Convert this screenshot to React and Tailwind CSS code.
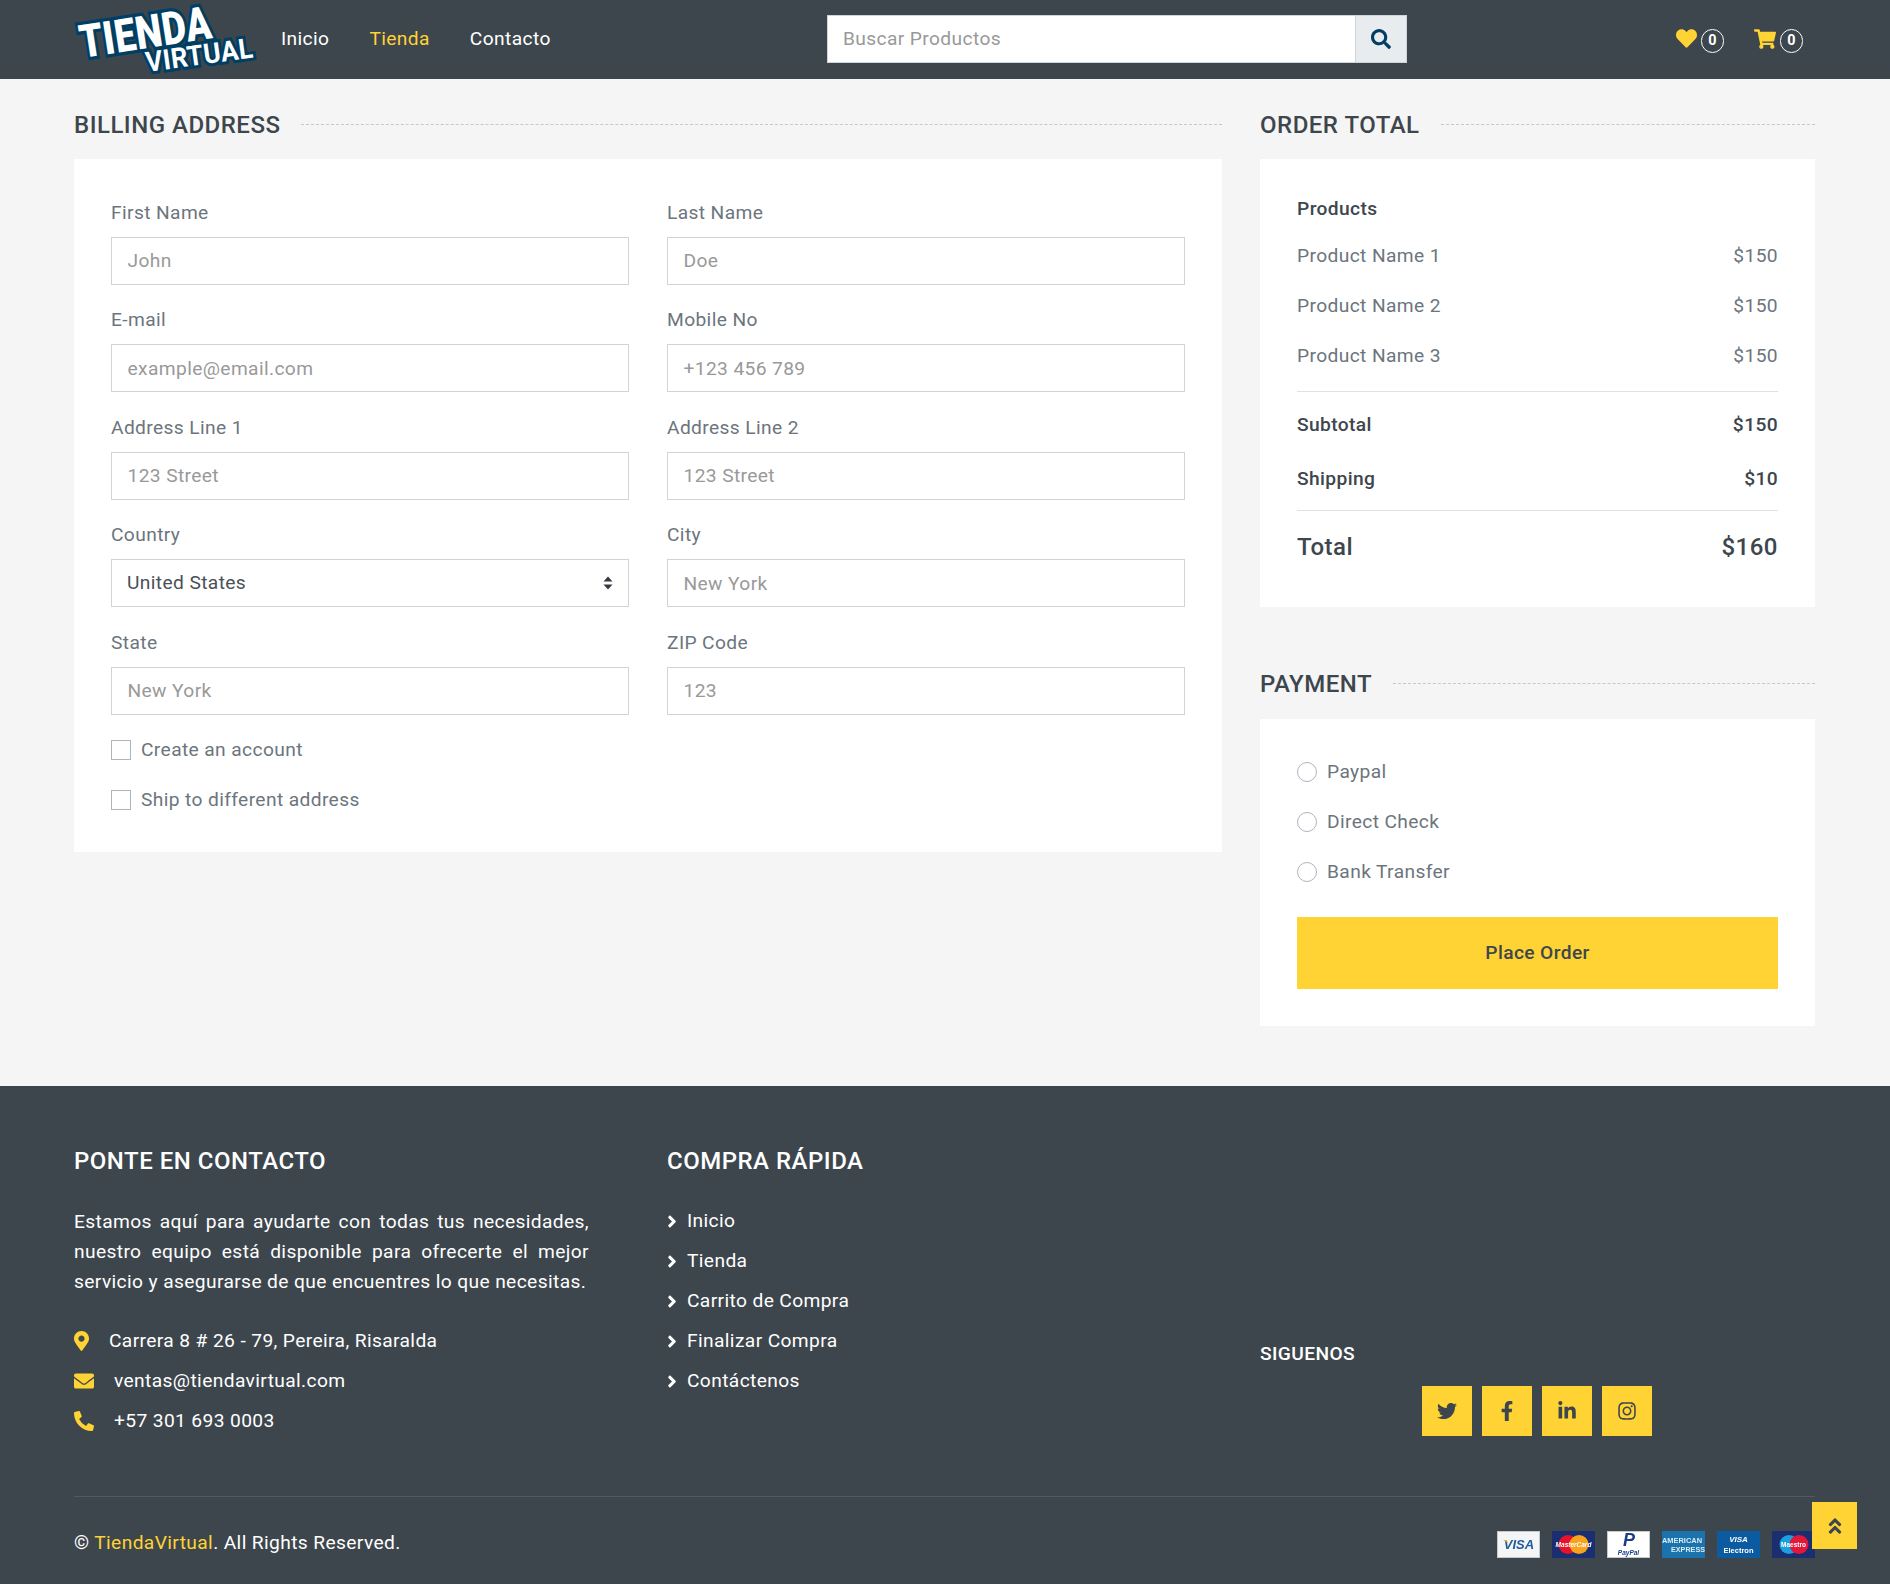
import React from "react";
import {
    FaHeart, FaShoppingCart, FaSearch, FaMapMarkerAlt, FaEnvelope, FaPhoneAlt,
    FaAngleRight, FaTwitter, FaFacebookF, FaLinkedinIn, FaInstagram, FaAngleDoubleUp,
} from "react-icons/fa";

const Logo = () => (
    <svg width="182" height="79" viewBox="0 0 182 79" className="block shrink-0 overflow-visible">
        <text transform="rotate(-8.7 6 58)" x="6" y="58" textLength="133" lengthAdjust="spacingAndGlyphs" fill="#fff" stroke="#003e63" strokeWidth="6.5" strokeLinejoin="miter" paintOrder="stroke" className="[font-family:Roboto,sans-serif] font-black text-[46px]">TIENDA</text>
        <text transform="rotate(-7.8 71 72)" x="71" y="72" textLength="108" lengthAdjust="spacingAndGlyphs" fill="#fff" stroke="#003e63" strokeWidth="6" strokeLinejoin="miter" paintOrder="stroke" className="[font-family:Roboto,sans-serif] font-bold text-[28px]">VIRTUAL</text>
    </svg>
);

const Field = ({ label, placeholder }) => (
    <div className="mb-[20.5px]">
        <label className="block h-[29px] mb-[9.8px] leading-[29px]">{label}</label>
        <input
            type="text"
            placeholder={placeholder}
            className="block w-full h-[48.2px] px-[15.5px] bg-white border border-[#ced4da] text-[#495057] placeholder:text-[#999] outline-none"
        />
    </div>
);

const SelectField = () => (
    <div className="mb-[20.5px]">
        <label className="block h-[29px] mb-[9.8px] leading-[29px]">Country</label>
        <div className="relative">
            <select className="block w-full h-[48.2px] px-[15px] bg-white border border-[#ced4da] text-[#495057] outline-none appearance-none">
                <option>United States</option>
                <option>Afghanistan</option>
                <option>Albania</option>
                <option>Algeria</option>
            </select>
            <svg width="10" height="14" viewBox="0 0 10 14" className="absolute right-[16px] top-[17px] pointer-events-none">
                <path d="M5 0.5L9.5 5.5H0.5Z M5 13.5L0.5 8.5H9.5Z" fill="#343a40" />
            </svg>
        </div>
    </div>
);

const Check = ({ label }) => (
    <div className="flex items-center h-[50px]">
        <span className="w-[20px] h-[20px] bg-white border border-[#adb5bd] mr-[10px]" />
        <span>{label}</span>
    </div>
);

const Radio = ({ label }) => (
    <div className="flex items-center h-[50px]">
        <span className="w-[20px] h-[20px] rounded-full bg-white border border-[#adb5bd] mr-[10px]" />
        <span>{label}</span>
    </div>
);

const SectionTitle = ({ children }) => (
    <div className="flex items-center h-[30px]">
        <h5 className="mt-[2px] font-medium text-[24px] leading-[30px] tracking-[0.5px] text-[#3d464d] uppercase pr-[21px] whitespace-nowrap">{children}</h5>
        <div className="grow border-t border-dashed border-[#c8c8c8]" />
    </div>
);

const PriceRow = ({ name, price }) => (
    <div className="flex justify-between items-center h-[50px]">
        <span>{name}</span>
        <span>{price}</span>
    </div>
);

const TotalRow = ({ name, price }) => (
    <div className="flex justify-between items-center font-medium text-[#3d464d] h-[54px]">
        <span>{name}</span>
        <span>{price}</span>
    </div>
);

const FooterLink = ({ children }) => (
    <a href="#" className="flex items-center h-[40px] text-white">
        <FaAngleRight className="text-[#fff] text-[19px] w-[12px] ml-[-1px] mr-[9px]" />
        {children}
    </a>
);

const Social = ({ Icon }) => (
    <a href="#" className="flex items-center justify-center w-[50px] h-[50px] bg-[#ffd333] text-[#3d464d] text-[20px]">
        <Icon />
    </a>
);

const PayCard = ({ bg, children }) => (
    <svg width="43" height="27" viewBox="0 0 43 27" className="shrink-0 blur-[0.3px]">
        <rect width="43" height="27" fill={bg} />
        {children}
    </svg>
);

const PaymentCards = () => (
    <div className="flex gap-[12px] mt-[2px] tracking-normal [font-family:'Liberation_Sans',sans-serif]">
        <PayCard bg="#f4f5f6">
            <rect x="0.5" y="0.5" width="42" height="26" fill="none" stroke="#c6c8ca" />
            <text x="22" y="18" textAnchor="middle" fill="#1d5c98" className="text-[13px] font-bold italic">VISA</text>
            <path d="M6 9h4l1 3z" fill="#e9a92c" />
        </PayCard>
        <PayCard bg="#1b2f70">
            <circle cx="16" cy="13.5" r="9.5" fill="#e8132a" />
            <circle cx="27" cy="13.5" r="9.5" fill="#f7a31c" />
            <text x="21.5" y="16" textAnchor="middle" fill="#fff" className="text-[6.5px] font-bold italic">MasterCard</text>
        </PayCard>
        <PayCard bg="#fff">
            <rect x="0.5" y="0.5" width="42" height="26" fill="none" stroke="#c6c8ca" />
            <text x="22" y="15" textAnchor="middle" fill="#1b3d85" className="text-[18px] font-bold italic">P</text>
            <text x="21.5" y="24" textAnchor="middle" fill="#1b3d85" className="text-[6.5px] font-bold italic">PayPal</text>
        </PayCard>
        <PayCard bg="#1a73ad">
            <text x="0" y="12" textLength="40" lengthAdjust="spacingAndGlyphs" fill="#d8edf8" className="text-[7.5px] font-bold">AMERICAN</text>
            <text x="9" y="21" textLength="34" lengthAdjust="spacingAndGlyphs" fill="#d8edf8" className="text-[7.5px] font-bold">EXPRESS</text>
        </PayCard>
        <PayCard bg="#0c5aa0">
            <text x="21.5" y="11" textAnchor="middle" fill="#fff" className="text-[8px] font-bold italic">VISA</text>
            <text x="21.5" y="22" textAnchor="middle" fill="#fff" className="text-[7.5px] font-bold">Electron</text>
        </PayCard>
        <PayCard bg="#1b2f70">
            <circle cx="17" cy="13.5" r="9.5" fill="#1aa0dc" />
            <circle cx="27" cy="13.5" r="9.5" fill="#e2173a" />
            <text x="21.5" y="16" textAnchor="middle" fill="#fff" className="text-[6.5px] font-bold">Maestro</text>
        </PayCard>
    </div>
);

const App = () => {
    return (
        <div className="relative w-[1890px] min-h-[1584px] bg-[#f5f5f5] text-[#6c757d] text-[19.2px] tracking-[0.38px] [font-family:Roboto,sans-serif]">
            <header className="flex items-center h-[79px] pl-[76px] bg-[#3d464d]">
                <div className="w-[205px] shrink-0"><Logo /></div>
                <nav className="flex gap-[40px] w-[546px] shrink-0 text-white">
                    <a href="#">Inicio</a>
                    <a href="#" className="text-[#ffd333]">Tienda</a>
                    <a href="#">Contacto</a>
                </nav>
                <div className="flex w-[580px] h-[48px] mb-[1px] shrink-0">
                    <input
                        type="text"
                        placeholder="Buscar Productos"
                        className="grow min-w-0 px-[15px] bg-white border border-[#ced4da] text-[#495057] placeholder:text-[#999] outline-none"
                    />
                    <button className="flex items-center justify-center w-[51px] bg-[#e9ecef] border border-[#ced4da] border-l-0 text-[#003e63] text-[20px]">
                        <FaSearch />
                    </button>
                </div>
                <div className="flex items-center ml-auto mt-[3px] pr-[87px] tracking-normal">
                    <FaHeart className="text-[#ffd333] text-[21px] mr-[4px] mt-[-6px]" />
                    <span className="flex items-center justify-center w-[23px] h-[24px] rounded-full border border-white text-white text-[14.4px] font-bold">0</span>
                    <FaShoppingCart className="text-[#ffd333] text-[22px] ml-[30px] mr-[4px] mt-[-5px]" />
                    <span className="flex items-center justify-center w-[23px] h-[24px] rounded-full border border-white text-white text-[14.4px] font-bold">0</span>
                </div>
            </header>

            <main className="grid grid-cols-[1148px_555px] gap-x-[38px] px-[74px] pt-[30px] pb-[60px]">
                <div>
                    <SectionTitle>Billing Address</SectionTitle>
                    <div className="mt-[20px] bg-white px-[37px] pt-[39px] pb-[27px]">
                        <div className="grid grid-cols-2 gap-x-[38px]">
                            <Field label="First Name" placeholder="John" />
                            <Field label="Last Name" placeholder="Doe" />
                            <Field label="E-mail" placeholder="example@email.com" />
                            <Field label="Mobile No" placeholder="+123 456 789" />
                            <Field label="Address Line 1" placeholder="123 Street" />
                            <Field label="Address Line 2" placeholder="123 Street" />
                            <SelectField />
                            <Field label="City" placeholder="New York" />
                            <Field label="State" placeholder="New York" />
                            <Field label="ZIP Code" placeholder="123" />
                        </div>
                        <div className="mt-[-10px]">
                            <Check label="Create an account" />
                            <Check label="Ship to different address" />
                        </div>
                    </div>
                </div>

                <div>
                    <SectionTitle>Order Total</SectionTitle>
                    <div className="mt-[20px] bg-white px-[37px] pt-[35px] pb-[25px]">
                        <div className="font-medium text-[#3d464d] h-[30px] leading-[30px]">Products</div>
                        <div className="mt-[7px]">
                            <PriceRow name="Product Name 1" price="$150" />
                            <PriceRow name="Product Name 2" price="$150" />
                            <PriceRow name="Product Name 3" price="$150" />
                        </div>
                        <div className="mt-[10px] pt-[6px] border-t border-[#dee2e6]">
                            <TotalRow name="Subtotal" price="$150" />
                            <TotalRow name="Shipping" price="$10" />
                        </div>
                        <div className="flex justify-between items-center mt-[4px] h-[72px] border-t border-[#dee2e6] font-medium text-[#3d464d] text-[24px] tracking-[0.5px]">
                            <span>Total</span>
                            <span>$160</span>
                        </div>
                    </div>

                    <div className="mt-[61px]">
                        <SectionTitle>Payment</SectionTitle>
                    </div>
                    <div className="mt-[21px] bg-white px-[37px] pt-[28px] pb-[37px]">
                        <Radio label="Paypal" />
                        <Radio label="Direct Check" />
                        <Radio label="Bank Transfer" />
                        <button className="block w-full h-[72px] mt-[20px] bg-[#ffd333] font-medium text-[#3d464d]">Place Order</button>
                    </div>
                </div>
            </main>

            <footer className="relative bg-[#3d464d] text-white pl-[74px] pr-[75px] pt-[60px] h-[498px]">
                <div className="grid grid-cols-[555px_555px_555px] gap-x-[38px] h-[350px]">
                    <div>
                        <h5 className="font-medium text-[24px] leading-[30px] tracking-[0.5px] uppercase">Ponte en Contacto</h5>
                        <p className="mt-[31px] w-[515px] leading-[30px] text-justify">
                            Estamos aquí para ayudarte con todas tus necesidades, nuestro equipo está disponible para ofrecerte el mejor servicio y asegurarse de que encuentres lo que necesitas.
                        </p>
                        <div className="mt-[24px]">
                            <div className="flex items-center h-[40px]">
                                <FaMapMarkerAlt className="text-[#ffd333] text-[20px] w-[15px] mr-[20px]" />
                                Carrera 8 # 26 - 79, Pereira, Risaralda
                            </div>
                            <div className="flex items-center h-[40px]">
                                <FaEnvelope className="text-[#ffd333] text-[20px] w-[20px] mr-[20px]" />
                                ventas@tiendavirtual.com
                            </div>
                            <div className="flex items-center h-[40px]">
                                <FaPhoneAlt className="text-[#ffd333] text-[20px] w-[20px] mr-[20px]" />
                                +57 301 693 0003
                            </div>
                        </div>
                    </div>
                    <div>
                        <h5 className="font-medium text-[24px] leading-[30px] tracking-[0.5px] uppercase">Compra Rápida</h5>
                        <div className="mt-[25.6px]">
                            <FooterLink>Inicio</FooterLink>
                            <FooterLink>Tienda</FooterLink>
                            <FooterLink>Carrito de Compra</FooterLink>
                            <FooterLink>Finalizar Compra</FooterLink>
                            <FooterLink>Contáctenos</FooterLink>
                        </div>
                    </div>
                    <div className="pt-[193px]">
                        <div className="font-medium h-[30px] leading-[30px] uppercase">Siguenos</div>
                        <div className="flex justify-center gap-[10px] mt-[17px] pr-[1px]">
                            <Social Icon={FaTwitter} />
                            <Social Icon={FaFacebookF} />
                            <Social Icon={FaLinkedinIn} />
                            <Social Icon={FaInstagram} />
                        </div>
                    </div>
                </div>
                <div className="flex items-center justify-between h-[88px] pt-[5px] border-t border-[#525a61]">
                    <div>© <a href="#" className="text-[#ffd333]">TiendaVirtual</a>. All Rights Reserved.</div>
                    <PaymentCards />
                </div>
                <a href="#" className="absolute right-[33px] bottom-[35px] flex items-center justify-center w-[45px] h-[47px] bg-[#ffd333] text-[#3d464d] text-[20px]">
                    <FaAngleDoubleUp />
                </a>
            </footer>
        </div>
    );
};

export default App;
